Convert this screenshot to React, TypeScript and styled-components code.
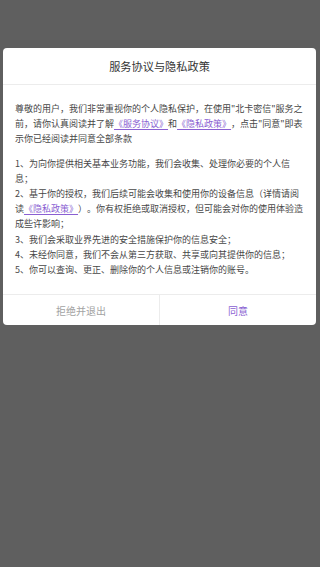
import React from "react";
import styled, {createGlobalStyle} from "styled-components";

const GlobalStyle = createGlobalStyle`
  html, body {
    margin: 0;
    padding: 0;
    background: #5f5f5f;
  }
  * {
    box-sizing: border-box;
  }
`;

const Overlay = styled.div`
  width: 320px;
  height: 567px;
  background: #5f5f5f;
  padding-top: 48px;
  padding-left: 3px;
  font-family: "Noto Sans CJK SC", "Noto Sans", sans-serif;
`;

const Dialog = styled.div`
  width: 313px;
  background: #ffffff;
  border-radius: 4px;
  overflow: hidden;
  display: flex;
  flex-direction: column;
`;

const Header = styled.div`
  height: 37px;
  display: flex;
  align-items: center;
  justify-content: center;
  border-bottom: 1px solid #ececec;
  color: #333333;
  font-size: 11.2px;
`;

const Body = styled.div`
  padding: 16px 12px 17px 12px;
  color: #474747;
  font-size: 9px;
  line-height: 15.2px;
  text-spacing-trim: space-all;
`;

const Intro = styled.p`
  margin: 0 0 9px 0;
`;

const Item = styled.p`
  margin: 0;
`;

const Link = styled.a`
  color: #8a5fd2;
  text-decoration: underline;
  text-underline-offset: 2px;
  cursor: pointer;
`;

const Footer = styled.div`
  display: flex;
  height: 31px;
  border-top: 1px solid #ececec;
`;

const ActionButton = styled.button<{ $primary?: boolean }>`
  flex: 1;
  border: none;
  background: transparent;
  font-family: inherit;
  font-size: 10px;
  color: ${(p) => (p.$primary ? "#8a5fd2" : "#a3a3a3")};
  border-left: ${(p) => (p.$primary ? "1px solid #ececec" : "none")};
  padding: 0;
  cursor: pointer;
`;

const App: React.FC = () => {
  return (
    <>
      <GlobalStyle/>
      <Overlay>
        <Dialog>
          <Header>服务协议与隐私政策</Header>
          <Body>
            <Intro>
              尊敬的用户，我们非常重视你的个人隐私保护，在使用"北卡密信"服务之前，请你认真阅读并了解
              <Link>《服务协议》</Link>和<Link>《隐私政策》</Link>，点击"同意"即表示你已经阅读并同意全部条款
            </Intro>
            <Item>1、为向你提供相关基本业务功能，我们会收集、处理你必要的个人信息；</Item>
            <Item>
              2、基于你的授权，我们后续可能会收集和使用你的设备信息（详情请阅读<Link>《隐私政策》</Link>）。你有权拒绝或取消授权，但可能会对你的使用体验造成些许影响；
            </Item>
            <Item>3、我们会采取业界先进的安全措施保护你的信息安全；</Item>
            <Item>4、未经你同意，我们不会从第三方获取、共享或向其提供你的信息；</Item>
            <Item>5、你可以查询、更正、删除你的个人信息或注销你的账号。</Item>
          </Body>
          <Footer>
            <ActionButton>拒绝并退出</ActionButton>
            <ActionButton $primary>同意</ActionButton>
          </Footer>
        </Dialog>
      </Overlay>
    </>
  );
};

export default App;
